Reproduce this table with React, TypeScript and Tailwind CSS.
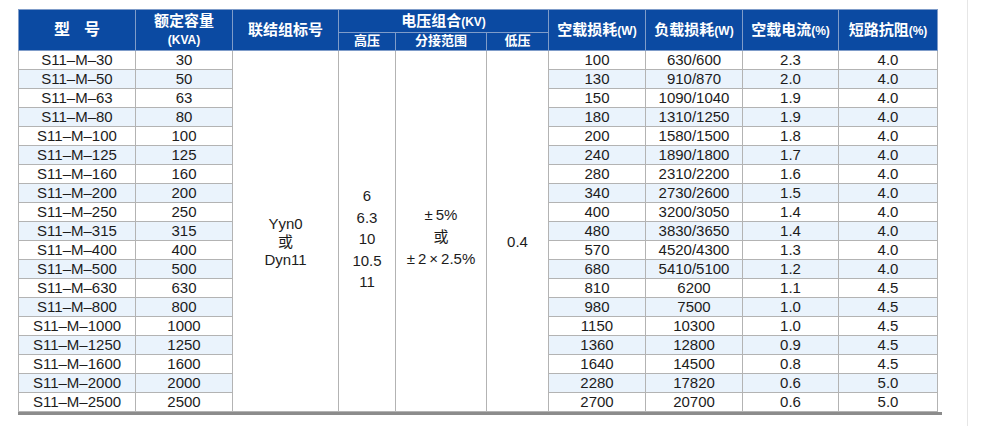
const rows = [
  ['S11–M–30', '30', '100', '630/600', '2.3', '4.0'],
  ['S11–M–50', '50', '130', '910/870', '2.0', '4.0'],
  ['S11–M–63', '63', '150', '1090/1040', '1.9', '4.0'],
  ['S11–M–80', '80', '180', '1310/1250', '1.9', '4.0'],
  ['S11–M–100', '100', '200', '1580/1500', '1.8', '4.0'],
  ['S11–M–125', '125', '240', '1890/1800', '1.7', '4.0'],
  ['S11–M–160', '160', '280', '2310/2200', '1.6', '4.0'],
  ['S11–M–200', '200', '340', '2730/2600', '1.5', '4.0'],
  ['S11–M–250', '250', '400', '3200/3050', '1.4', '4.0'],
  ['S11–M–315', '315', '480', '3830/3650', '1.4', '4.0'],
  ['S11–M–400', '400', '570', '4520/4300', '1.3', '4.0'],
  ['S11–M–500', '500', '680', '5410/5100', '1.2', '4.0'],
  ['S11–M–630', '630', '810', '6200', '1.1', '4.5'],
  ['S11–M–800', '800', '980', '7500', '1.0', '4.5'],
  ['S11–M–1000', '1000', '1150', '10300', '1.0', '4.5'],
  ['S11–M–1250', '1250', '1360', '12800', '0.9', '4.5'],
  ['S11–M–1600', '1600', '1640', '14500', '0.8', '4.5'],
  ['S11–M–2000', '2000', '2280', '17820', '0.6', '5.0'],
  ['S11–M–2500', '2500', '2700', '20700', '0.6', '5.0'],
];

const th = 'border border-[#7f9cc9] bg-[#0b4aa2] text-white font-bold p-0 leading-tight';
const td = 'border border-[#b3b3b3] p-0 text-center';
const merged = 'border border-[#b3b3b3] p-0 text-center align-middle bg-white';

export default function App() {
  return (
    <div
      className="flex h-[426px] w-[1000px] bg-white text-[#1c1c1c]"
      style={{ fontFamily: '"Liberation Sans", "Noto Sans CJK SC", sans-serif' }}
    >
      <div className="w-[967px] pl-[18px] pt-[9px]">
        <table className="table-fixed border-collapse text-[15px]">
          <colgroup>
            <col className="w-[117px]" />
            <col className="w-[97px]" />
            <col className="w-[106px]" />
            <col className="w-[57px]" />
            <col className="w-[91px]" />
            <col className="w-[62px]" />
            <col className="w-[97px]" />
            <col className="w-[97px]" />
            <col className="w-[96px]" />
            <col className="w-[99px]" />
          </colgroup>
          <thead>
            <tr className="h-[23px]">
              <th rowSpan={2} className={`${th} text-[16px] tracking-[14px]`}>
                <span className="pl-[14px]">型号</span>
              </th>
              <th rowSpan={2} className={`${th} text-[15px]`}>
                <div>额定容量</div>
                <div className="text-[12px] mt-[2px]">(KVA)</div>
              </th>
              <th rowSpan={2} className={`${th} text-[15px]`}>联结组标号</th>
              <th colSpan={3} className={`${th} text-[15px]`}>
                电压组合<span className="text-[12px]">(KV)</span>
              </th>
              <th rowSpan={2} className={`${th} text-[15px]`}>
                空载损耗<span className="text-[12px]">(W)</span>
              </th>
              <th rowSpan={2} className={`${th} text-[15px]`}>
                负载损耗<span className="text-[12px]">(W)</span>
              </th>
              <th rowSpan={2} className={`${th} text-[15px]`}>
                空载电流<span className="text-[12px]">(%)</span>
              </th>
              <th rowSpan={2} className={`${th} text-[15px]`}>
                短路抗阻<span className="text-[12px]">(%)</span>
              </th>
            </tr>
            <tr className="h-[18px]">
              <th className={`${th} text-[13px]`}>高压</th>
              <th className={`${th} text-[13px]`}>分接范围</th>
              <th className={`${th} text-[13px]`}>低压</th>
            </tr>
          </thead>
          <tbody>
            {rows.map((r, i) => {
              const bg = i % 2 === 1 ? 'bg-[#eaf3fc]' : 'bg-white';
              return (
                <tr key={r[0]} className="h-[19px] leading-[18px]">
                  <td className={`${td} ${bg}`}>{r[0]}</td>
                  <td className={`${td} ${bg}`}>{r[1]}</td>
                  {i === 0 && (
                    <>
                      <td rowSpan={19} className={`${merged} pt-[22px]`}>
                        <div>Yyn0</div>
                        <div>或</div>
                        <div>Dyn11</div>
                      </td>
                      <td rowSpan={19} className={`${merged} pt-[16px] leading-[21.5px]`}>
                        <div>6</div>
                        <div>6.3</div>
                        <div>10</div>
                        <div>10.5</div>
                        <div>11</div>
                      </td>
                      <td rowSpan={19} className={`${merged} pt-[12px] leading-[22px]`}>
                        <div>±&thinsp;5%</div>
                        <div>或</div>
                        <div>±&thinsp;2&thinsp;×&thinsp;2.5%</div>
                      </td>
                      <td rowSpan={19} className={`${merged} pt-[22px]`}>0.4</td>
                    </>
                  )}
                  <td className={`${td} ${bg}`}>{r[2]}</td>
                  <td className={`${td} ${bg}`}>{r[3]}</td>
                  <td className={`${td} ${bg}`}>{r[4]}</td>
                  <td className={`${td} ${bg}`}>{r[5]}</td>
                </tr>
              );
            })}
          </tbody>
        </table>
        <div className="h-[3px] w-[924px] bg-[#8c8c8c]" />
      </div>
      <div className="flex-1 border-l border-[#e6e6e6]" />
    </div>
  );
}
